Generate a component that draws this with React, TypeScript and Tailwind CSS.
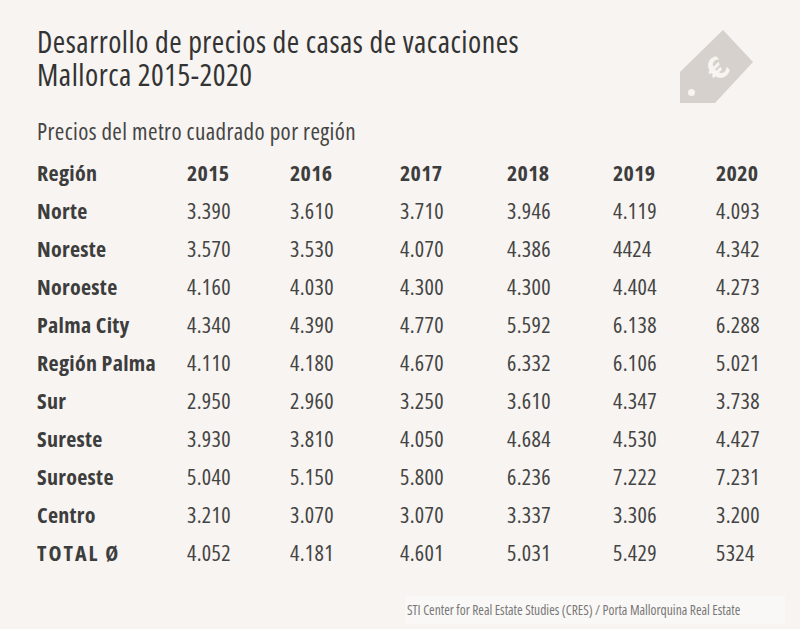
import React from "react"

const YEARS = ["2015", "2016", "2017", "2018", "2019", "2020"]

const ROWS: [string, string[]][] = [
	["Norte", ["3.390", "3.610", "3.710", "3.946", "4.119", "4.093"]],
	["Noreste", ["3.570", "3.530", "4.070", "4.386", "4424", "4.342"]],
	["Noroeste", ["4.160", "4.030", "4.300", "4.300", "4.404", "4.273"]],
	["Palma City", ["4.340", "4.390", "4.770", "5.592", "6.138", "6.288"]],
	["Región Palma", ["4.110", "4.180", "4.670", "6.332", "6.106", "5.021"]],
	["Sur", ["2.950", "2.960", "3.250", "3.610", "4.347", "3.738"]],
	["Sureste", ["3.930", "3.810", "4.050", "4.684", "4.530", "4.427"]],
	["Suroeste", ["5.040", "5.150", "5.800", "6.236", "7.222", "7.231"]],
	["Centro", ["3.210", "3.070", "3.070", "3.337", "3.306", "3.200"]],
]

const TOTAL = ["4.052", "4.181", "4.601", "5.031", "5.429", "5324"]

const grid = "grid grid-cols-[150px_103px_110px_107px_106px_103px_1fr] h-[38px] items-center"

function PriceTag() {
	return (
		<svg width="80" height="80" viewBox="0 0 80 80" className="shrink-0">
			<path d="M45 2 L75 34 L37 75 L2 75 L2 44 Z" fill="#d6d1cc" />
			<circle cx="13.5" cy="64.5" r="3.5" fill="#f7f4f1" />
			<text
				x="40"
				y="51"
				fontSize="30"
				fontWeight="700"
				fill="#f7f4f1"
				textAnchor="middle"
				transform="rotate(-45 40 41)"
				fontFamily="'DejaVu Sans', sans-serif"
			>
				€
			</text>
		</svg>
	)
}

export default function App() {
	return (
		<div className="w-[800px] h-[629px] bg-[#f7f4f1] text-[#3a3a3a] pl-[37px] pt-[25px] flex flex-col font-['Open_Sans',sans-serif] font-stretch-condensed">
			{/* Header */}
			<div className="flex justify-between items-start pr-[42px]">
				<h1 className="text-[30px] leading-[33px] tracking-[0.5px] font-normal text-[#333]">
					Desarrollo de precios de casas de vacaciones
					<br />
					Mallorca 2015-2020
				</h1>
				<div className="mt-[3px]">
					<PriceTag />
				</div>
			</div>

			<p className="mt-[8px] text-[23px] leading-[30px] tracking-[0.4px] text-[#444]">
				Precios del metro cuadrado por región
			</p>

			{/* Table */}
			<div className="mt-[7px] text-[22px] tracking-[0.3px]">
				<div className={`${grid} font-bold text-[#3d3d3d]`}>
					<span>Región</span>
					{YEARS.map((y) => (
						<span key={y}>{y}</span>
					))}
				</div>
				{ROWS.map(([name, vals]) => (
					<div key={name} className={grid}>
						<span className="font-bold text-[#3d3d3d]">{name}</span>
						{vals.map((v, i) => (
							<span key={i} className="text-[#444]">
								{v}
							</span>
						))}
					</div>
				))}
				<div className={grid}>
					<span className="font-bold tracking-[2px] text-[#3d3d3d]">TOTAL Ø</span>
					{TOTAL.map((v, i) => (
						<span key={i} className="text-[#444]">
							{v}
						</span>
					))}
				</div>
			</div>

			{/* Source */}
			<div className="mt-auto mb-[5px] ml-[368px] w-[380px] h-[28px] bg-[#faf8f6] flex items-center pl-[2px]">
				<span className="text-[13.5px] text-[#777] whitespace-nowrap">
					STI Center for Real Estate Studies (CRES) / Porta Mallorquina Real Estate
				</span>
			</div>
		</div>
	)
}
